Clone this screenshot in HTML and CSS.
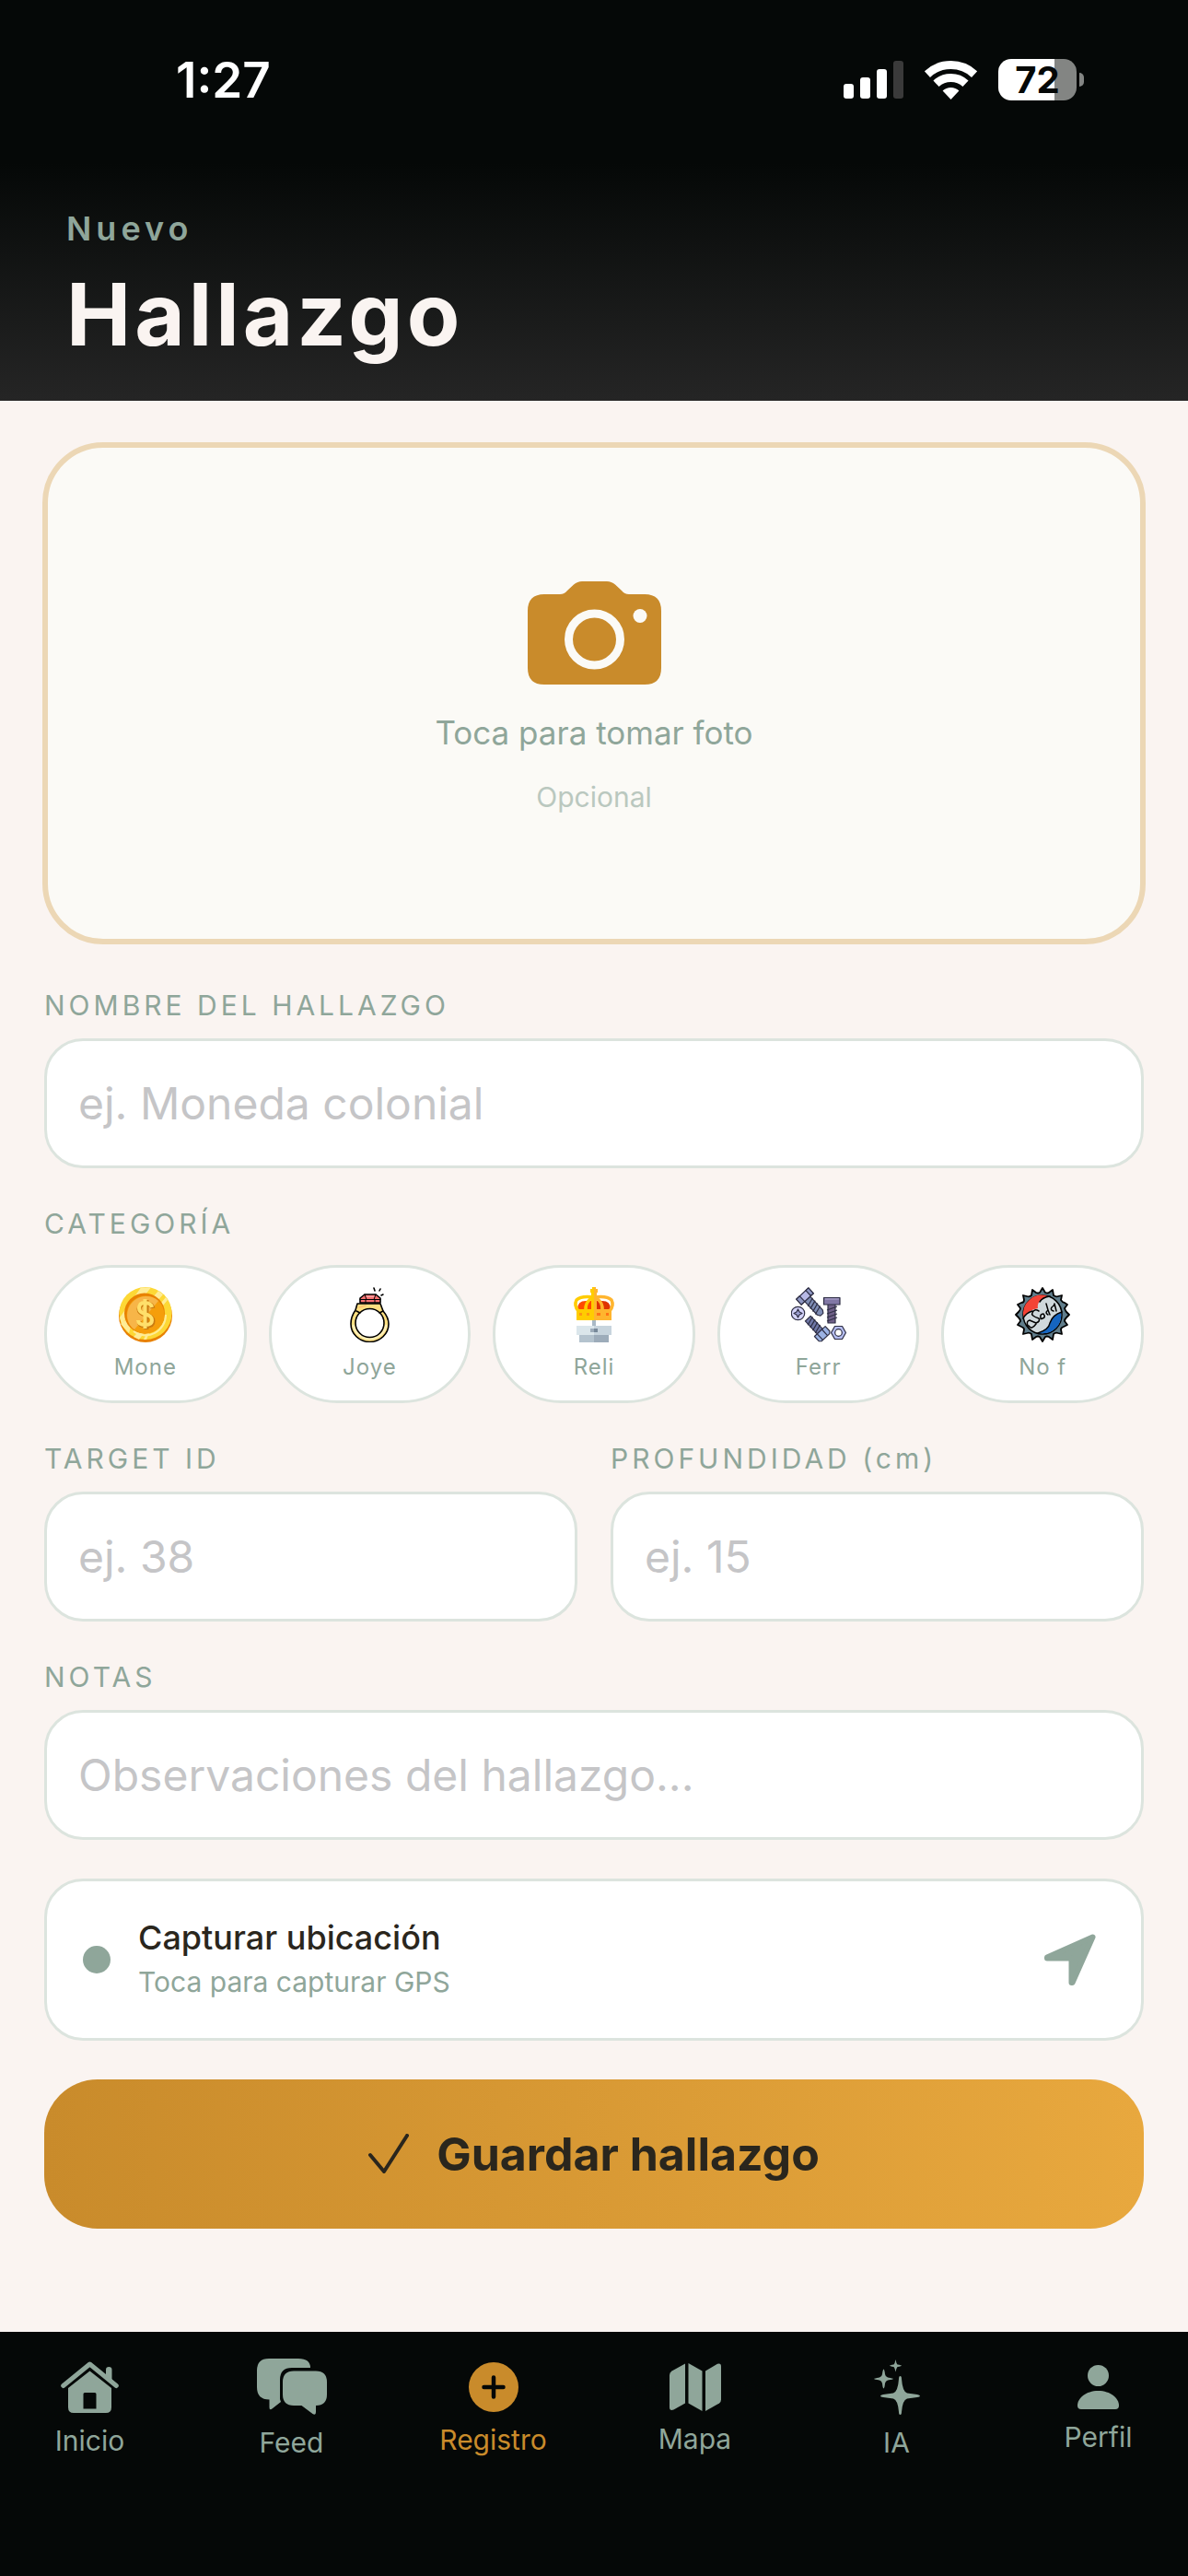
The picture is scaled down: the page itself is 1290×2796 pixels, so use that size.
FILE: index.html
```html
<!DOCTYPE html>
<html lang="es">
  <head>
    <meta charset="UTF-8" />
    <meta name="viewport" content="width=device-width, initial-scale=1.0" />
    <title>Nuevo Hallazgo</title>
    <link rel="stylesheet" href="styles.css">
  </head>
  <body>
    <div class="status-bar">
      <span class="status-time">1:27</span>
      <div class="status-icons">
        <svg width="65" height="41" viewBox="0 0 65 41" fill="#fff">
          <rect x="0" y="25" width="11" height="16" rx="3" />
          <rect x="18" y="18" width="11" height="23" rx="3" />
          <rect x="36" y="9" width="11" height="32" rx="3" />
          <rect x="54" y="0" width="11" height="41" rx="3" fill="#3a3a3a" />
        </svg>
        <svg width="57" height="42" viewBox="0 0 57 42" fill="none" stroke="#fff" stroke-width="9">
          <path d="M2.9 14.6A37.5 37.5 0 0 1 54.1 14.6" />
          <path d="M12.5 24.8A23.5 23.5 0 0 1 44.5 24.8" />
          <path d="M28.5 42L19.6 32.5A13 13 0 0 1 37.4 32.5Z" fill="#fff" stroke="none" />
        </svg>
        <div class="battery">
          <span class="battery-level">72</span>
          <span class="battery-tip"></span>
        </div>
      </div>
    </div>

    <header class="header">
      <p class="header-kicker">Nuevo</p>
      <h1 class="header-title">Hallazgo</h1>
    </header>

    <main class="form">
      <!-- Photo -->
      <button class="photo" type="button">
        <svg width="145" height="112" viewBox="0 0 145 112">
          <path fill="#c98b2b" d="M18 14H35Q40 14 43 10L50 3.500Q54 0 59 0H86Q91 0 95 3.500L102 10Q105 14 110 14H127Q145 14 145 32V94Q145 112 127 112H18Q0 112 0 94V32Q0 14 18 14Z" />
          <circle cx="72.500" cy="63" r="28" fill="none" stroke="#fbfaf6" stroke-width="9" />
          <circle cx="122" cy="37.500" r="7.500" fill="#fbfaf6" />
        </svg>
        <span class="photo-text">Toca para tomar foto</span>
        <span class="photo-hint">Opcional</span>
      </button>

      <!-- Name -->
      <div class="field">
        <label class="label" for="nombre">NOMBRE DEL HALLAZGO</label>
        <input class="input" id="nombre" type="text" placeholder="ej. Moneda colonial" />
      </div>

      <!-- Category -->
      <div class="field">
        <h2 class="label label-category">CATEGORÍA</h2>
        <div class="categories">
          <button class="category" type="button">
            <svg width="60" height="60" viewBox="0 0 60 60">
              <ellipse cx="30" cy="31" rx="29" ry="29" fill="#e88102" />
              <circle cx="30" cy="28.500" r="28.500" fill="#fdd835" />
              <path fill="#ffec96" d="M25 0.500L36 0.500L4 40L2 33ZM44 4L49 8L43 15L38 11ZM52 11L54 14L49 20L47 17ZM3 40L18 28L12 50ZM17 54L25 46L29 49L23 57ZM28 57L31 50H34L31 57Z" />
              <circle cx="29" cy="28.500" r="22" fill="#e88102" />
              <circle cx="30" cy="30" r="20.500" fill="#f59e0b" />
              <path fill="#f7b548" d="M13 41A20.500 20.500 0 0 1 44 15L18 46Q15 44 13 41Z" />
              <path d="M52 30A22 22 0 0 1 17 48" fill="none" stroke="#ffec96" stroke-width="2" />
              <path d="M38 23Q37 18 30 18Q23 18 23 24Q23 28 30 30Q38 32 38 37Q38 42 31 42Q23 42 23 37M31 14V46" fill="none" stroke="#c97a10" stroke-width="5" />
              <path d="M37 22Q36 17 29 17Q23 17 23 23Q23 27 29 29Q37 31 37 36Q37 41 30 41Q22 41 22 36M29.500 13V45" fill="none" stroke="#ffdf6b" stroke-width="4" />
            </svg>
            <span>Mone</span>
          </button>
          <button class="category" type="button">
            <svg width="60" height="60" viewBox="0 0 60 60" stroke="#000" stroke-width="1.600" stroke-linejoin="round" stroke-linecap="round">
              <path fill="#ffdf80" d="M17 18H42L45 26Q51 33 51 40A20.500 19.500 0 1 1 10 40Q10 32 15 25Z" />
              <path fill="none" stroke="#fff0b8" stroke-width="2.500" d="M12.800 42A18 17 0 0 0 48.200 42" />
              <circle cx="30.500" cy="39" r="15.500" fill="#fff" />
              <path fill="none" stroke="#ffc170" d="M19 22L26 20" />
              <path fill="none" d="M16 26L20 28M45 26L41 28" />
              <path fill="#f87171" d="M20 17V12L25 8H37L42 12V17Z" />
              <path fill="none" stroke="#ffa3a3" d="M27 10.200H35" />
              <path fill="none" stroke-width="1" d="M20 13.500H42M26 13.500V17M36 13.500V17M25 8L27 13.500M37 8L35 13.500" />
              <path fill="none" d="M35 1L36 4M42 2L41 4M45 8L43 9" />
            </svg>
            <span>Joye</span>
          </button>
          <button class="category" type="button">
            <svg width="60" height="60" viewBox="0 0 60 60">
              <path fill="#ff4b00" d="M12 24Q12 15 21 15H30V24Z" />
              <path fill="#df3300" d="M48 24Q48 15 39 15H30V24Z" />
              <path fill="none" stroke="#fc0" stroke-width="3.500" d="M13 26Q8 20 11 14Q16 9 30 11M21 26Q20 15 30 11" />
              <path fill="none" stroke="#ffb52e" stroke-width="3.500" d="M47 26Q52 20 49 14Q44 9 30 11M39 26Q40 15 30 11" />
              <path fill="#fc0" d="M11 24H30V36H11ZM28 0H30V25H27V6H26V2H28Z" />
              <path fill="#ffb52e" d="M30 24H49V36H30ZM30 0H32V2H34V6H33V25H30Z" />
              <path fill="#ff9811" d="M14 28H17V31H14ZM22 28H25V31H22Z" />
              <path fill="#ff7315" d="M33 28H37V31H33ZM43 28H46V31H43Z" />
              <path fill="#a9b9c6" d="M28 36H32V42H28Z" />
              <path fill="#dbe6eb" d="M11 42H30V52H11Z" />
              <path fill="#c7d4dd" d="M30 42H49V52H30Z" />
              <path fill="#b4c3ce" d="M14 52H30V60H14Z" />
              <path fill="#9dacba" d="M30 52H46V60H30Z" />
              <path fill="#9dacba" d="M26 45H30V49H26Z" />
              <path fill="#778899" d="M30 45H34V49H30Z" />
            </svg>
            <span>Reli</span>
          </button>
          <button class="category" type="button">
            <svg width="60" height="60" viewBox="0 0 60 60" stroke="#2f2f45" stroke-width="1.200" stroke-linejoin="round">
              <g transform="translate(15 10) rotate(-43)">
                <path fill="#7f8db5" d="M-4 4H4V24L2 27H-2L-4 24Z" />
                <path fill="none" d="M-5 10L5 7M-5 14L5 11M-5 18L5 15M-5 22L5 19" />
                <path fill="#b7b9e6" d="M-9 -4H9V4H-9Z" />
                <path fill="#8f98c4" d="M-9 -4H-4V4H-9ZM5 -4H9V4H5Z" />
              </g>
              <path fill="#6f6088" d="M40 18H48V39H40Z" />
              <path fill="none" d="M39 25L50 21M39 29L50 25M39 33L50 29M39 37L50 33" />
              <path fill="#8177a5" d="M35.500 11.500H53V19H35.500Z" />
              <path fill="none" stroke="#aaa2c8" d="M37 13H52" />
              <circle cx="7.500" cy="28.500" r="7.200" fill="#d3d3fa" />
              <path fill="#9fa2d8" d="M7.500 24L9 27L12 28.500L9 30L7.500 33L6 30L3 28.500L6 27Z" />
              <g transform="translate(34 51) rotate(137)">
                <path fill="#7079a8" d="M-4 4H4V23H-4Z" />
                <path fill="none" d="M-5 9L5 6M-5 13L5 10M-5 17L5 14M-5 21L5 18" />
                <path fill="#9bb2e3" d="M-8 -3L-6 -5H6L8 -3V4H-8Z" />
                <path fill="none" d="M-3 -5V4M4 -5V4" />
              </g>
              <path fill="#b5bdf0" d="M47.500 42.500H55.500L59.500 49.500L55.500 56.500H47.500L43.500 49.500Z" />
              <circle cx="51.500" cy="49.500" r="3.800" fill="#fff" />
            </svg>
            <span>Ferr</span>
          </button>
          <button class="category" type="button">
            <svg width="60" height="60" viewBox="0 0 60 60" stroke-linejoin="round" stroke-linecap="round">
              <path fill="#607d8b" stroke="#000" stroke-width="1.800" d="M30 1L33 6Q36 7 37 6L41 3L42 9Q45 11 47 10L51 9L50 14Q52 17 54 17L57 19L54 23Q55 26 56 27L59 30L56 33Q54 35 54 37L57 41L53 43Q50 44 50 46L51 51L47 50Q44 49 42 51L41 57L37 54Q35 53 33 54L30 59L27 54Q25 53 23 54L19 57L18 51Q16 49 13 50L9 51L10 46Q10 44 7 43L3 41L6 37Q6 35 4 33L1 30L4 27Q6 25 6 23L3 19L7 17Q10 17 10 14L9 9L13 10Q16 11 18 9L19 3L23 6Q25 7 27 6Z" />
              <circle cx="30" cy="30" r="21" fill="#cfd8dc" stroke="#000" stroke-width="1.500" />
              <path fill="#f44336" d="M9.500 33A20 20 0 0 1 36 10L27 15Q24 19 25 23Q19 24 15 27Q12 29 9.500 33Z" />
              <path fill="#1565c0" d="M50 27Q52 42 38 49Q32 51 25 50Q36 46 38 39Q40 31 50 27Z" />
              <path fill="none" stroke="#000" stroke-width="1.500" d="M9 34Q12 28 19 26M27 16Q30 11 38 10M25 50Q37 46 38 39Q41 30 51 27M14 42Q12 37 16 36L23 39Q28 37 26 34Q17 31 19 28Q21 23 26 26M23 40Q18 47 15 42M28 34Q27 29 31 29Q34 33 30 34Q28 35 28 34M36 30Q32 28 36 25L34 18M36 25L38 30M42 26Q38 25 40 22Q43 20 43 18L45 26" />
            </svg>
            <span>No f</span>
          </button>
        </div>
      </div>

      <!-- Target ID and depth -->
      <div class="row">
        <div class="field">
          <label class="label" for="target">TARGET ID</label>
          <input class="input" id="target" type="text" inputmode="numeric" placeholder="ej. 38" />
        </div>
        <div class="field">
          <label class="label" for="profundidad">PROFUNDIDAD (cm)</label>
          <input class="input" id="profundidad" type="text" inputmode="numeric" placeholder="ej. 15" />
        </div>
      </div>

      <!-- Notes -->
      <div class="field">
        <label class="label" for="notas">NOTAS</label>
        <textarea class="input" id="notas" rows="1" placeholder="Observaciones del hallazgo..."></textarea>
      </div>

      <!-- Location -->
      <button class="location" type="button">
        <span class="location-dot"></span>
        <span class="location-info">
          <span class="location-title">Capturar ubicación</span>
          <span class="location-text">Toca para capturar GPS</span>
        </span>
        <svg width="56" height="56" viewBox="0 0 56 56" fill="#8fa69a" stroke="#8fa69a" stroke-width="6" stroke-linejoin="round">
          <path d="M52.500 3.500L3 25.500V26.500H29.500V53H30.500Z" />
        </svg>
      </button>

      <button class="save" type="submit">
        <svg width="44" height="44" viewBox="0 0 44 44" fill="none" stroke="#2a261d" stroke-width="4" stroke-linecap="round" stroke-linejoin="round">
          <path d="M2 23L17 41L42 2" />
        </svg>
        <span>Guardar hallazgo</span>
      </button>
    </main>

    <nav class="tab-bar">
      <a class="tab" href="#inicio">
        <svg width="63" height="56" viewBox="0 0 63 56" fill="currentColor">
          <path fill="none" stroke="currentColor" stroke-width="5" stroke-linecap="round" stroke-linejoin="round" d="M2.700 26.500L31.500 3L60.300 26.500" />
          <path d="M49 17V9Q49 6 52.200 6Q55.500 6 55.500 9V22Z" />
          <path fill-rule="evenodd" d="M31.500 10.500L55 29V50Q55 56 49 56H14Q8 56 8 50V29ZM26 34Q24.500 34 24.500 35.500V51.500H38.500V35.500Q38.500 34 37 34Z" />
        </svg>
        <span>Inicio</span>
      </a>
      <a class="tab" href="#feed">
        <svg width="76" height="61" viewBox="0 0 76 61" fill="currentColor">
          <path d="M13 0H45Q58 0 58 10H38Q25 10 25 23V44L26 47L17 54Q13.500 57 13.500 53V44.500Q0 44.500 0 31V13Q0 0 13 0Z" />
          <path d="M40 13.500H64Q76 13.500 76 25.500V39Q76 51 64 51V58Q64 62 60.500 60L48.500 51H40Q28 51 28 39V25.500Q28 13.500 40 13.500Z" />
        </svg>
        <span>Feed</span>
      </a>
      <a class="tab tab-active" href="#registro">
        <svg width="54" height="54" viewBox="0 0 54 54">
          <circle cx="27" cy="27" r="27" fill="currentColor" />
          <path fill="none" stroke="#050807" stroke-width="4.500" stroke-linecap="round" d="M16.500 27H37.500M27 16.500V37.500" />
        </svg>
        <span>Registro</span>
      </a>
      <a class="tab" href="#mapa">
        <svg width="56" height="52" viewBox="0 0 56 52" fill="currentColor">
          <path d="M17 0.500V43.500L4.500 50.500Q0 52 0 48V13Q0 10 2.500 8.500Z" />
          <path d="M20.500 0L35.500 8.500V52L20.500 43.500Z" />
          <path d="M39 8.500L52 0.800Q56 -0.500 56 3.500V39.500Q56 42 54 43.500L39 52Z" />
        </svg>
        <span>Mapa</span>
      </a>
      <a class="tab" href="#ia">
        <svg width="50" height="60" viewBox="0 0 50 60" fill="currentColor">
          <path d="M28.500 18Q30 18 30 21Q31 35 36 36.500L47 38Q50 38.500 50 39.500Q50 40.500 47 41L36 42.500Q31 44 30 57Q30 60 28.500 60Q27 60 27 57Q26 44 21 42.500L10 41Q7 40.500 7 39.500Q7 38.500 10 38L21 36.500Q26 35 27 21Q27 18 28.500 18Z" />
          <path d="M10.500 10.500Q11.500 11 12 16Q12.500 19 15 19.500Q21 20.500 21 21Q21 21.500 15 22.500Q12.500 23 12 26Q11.500 31 10.500 31.500Q9.500 31 9 26Q8.500 23 6 22.500Q0 21.500 0 21Q0 20.500 6 19.500Q8.500 19 9 16Q9.500 11 10.500 10.500Z" />
          <path d="M23.500 0Q24.300 4.500 25.500 5.500Q30 6.200 30 6.800Q30 7.400 25.500 8Q24.300 9 23.500 13.500Q22.700 9 21.500 8Q17 7.400 17 6.800Q17 6.200 21.500 5.500Q22.700 4.500 23.500 0Z" />
        </svg>
        <span>IA</span>
      </a>
      <a class="tab" href="#perfil">
        <svg width="45" height="48" viewBox="0 0 45 48" fill="currentColor">
          <circle cx="22.500" cy="11.500" r="11.500" />
          <path d="M22.500 28C36 28 45 36 45 44Q45 48 41 48H4Q0 48 0 44C0 36 9 28 22.500 28Z" />
        </svg>
        <span>Perfil</span>
      </a>
    </nav>
  </body>
</html>
```
FILE: styles.css
```css
:root {
  --bg: #faf4f1;
  --dark: #050807;
  --sage: #8fa69a;
  --gold: #c98b2b;
  --text: #2a261d;
  --border: #dce4de;
}

* {
  margin: 0;
  padding: 0;
  box-sizing: border-box;
}

body {
  display: flex;
  flex-direction: column;
  min-height: 100vh;
  font-family: Inter, "Liberation Sans", sans-serif;
  background-color: var(--bg);
  color: var(--text);
}

button,
input,
textarea {
  font-family: inherit;
  color: inherit;
}

button {
  cursor: pointer;
}

svg {
  display: block;
  flex-shrink: 0;
}

/* Status bar */
.status-bar {
  display: flex;
  justify-content: space-between;
  align-items: center;
  height: 177px;
  padding: 0 121px 4px 191px;
  background-color: var(--dark);
  color: #fff;
}

.status-time {
  font-size: 53px;
  font-weight: 600;
}

.status-icons {
  display: flex;
  align-items: center;
  gap: 23px;
}

.battery {
  position: relative;
  width: 85px;
  height: 45px;
  border-radius: 14px;
  background: linear-gradient(90deg, #fff 72%, #838583 72%);
  color: var(--dark);
  text-align: center;
}

.battery-level {
  font-size: 40px;
  font-weight: 700;
  line-height: 45px;
}

.battery-tip {
  position: absolute;
  top: 15px;
  right: -8px;
  width: 5px;
  height: 15px;
  border-radius: 0 6px 6px 0;
  background-color: #838583;
}

/* Header */
.header {
  padding: 47px 72px 38px;
  background: linear-gradient(180deg, var(--dark), #252525);
}

.header-kicker {
  margin-bottom: 13px;
  font-size: 36px;
  font-weight: 600;
  line-height: 48px;
  letter-spacing: 5px;
  color: var(--sage);
}

.header-title {
  font-size: 94px;
  font-weight: 700;
  line-height: 112px;
  letter-spacing: 4px;
  color: #faf4f1;
}

/* Form */
.form {
  display: flex;
  flex: 1;
  flex-direction: column;
  gap: 42px;
  padding: 45px 48px;
}

.photo {
  display: flex;
  flex-direction: column;
  justify-content: center;
  align-items: center;
  gap: 28px;
  height: 545px;
  margin: 0 -2px 6px;
  padding-top: 8px;
  border: 6px solid #ecd7b5;
  border-radius: 66px;
  background-color: #fbfaf6;
}

.photo-text {
  font-size: 35px;
  line-height: 48px;
  color: var(--sage);
}

.photo-hint {
  font-size: 30px;
  line-height: 36px;
  color: #bac8bf;
}

.field {
  display: flex;
  flex-direction: column;
  min-width: 0;
}

.label {
  margin-bottom: 18px;
  font-size: 30px;
  font-weight: 400;
  line-height: 36px;
  letter-spacing: 4px;
  color: var(--sage);
}

.label-category {
  margin-bottom: 27px;
}

.input {
  display: block;
  width: 100%;
  height: 141px;
  padding: 36px 34px;
  border: 3px solid var(--border);
  border-radius: 42px;
  outline: none;
  background-color: #fff;
  font-size: 48px;
  line-height: 63px;
  resize: none;
  overflow: hidden;
}

.input::placeholder {
  color: #c5c5c7;
  opacity: 1;
}

.input:focus {
  border-color: var(--gold);
}

.row {
  display: grid;
  grid-template-columns: 1fr 1fr;
  gap: 36px;
}

/* Categories */
.categories {
  display: grid;
  grid-template-columns: repeat(5, 1fr);
  gap: 24px;
}

.category {
  display: flex;
  flex-direction: column;
  align-items: center;
  gap: 12px;
  height: 150px;
  padding-top: 21px;
  border: 3px solid var(--border);
  border-radius: 74px;
  background-color: #fff;
  font-size: 24px;
  line-height: 30px;
  letter-spacing: 1px;
  color: var(--sage);
}

/* Location */
.location {
  display: flex;
  align-items: center;
  gap: 30px;
  height: 176px;
  padding: 0 49px 0 39px;
  border: 3px solid var(--border);
  border-radius: 42px;
  background-color: #fff;
  text-align: left;
}

.location-dot {
  width: 30px;
  height: 30px;
  border-radius: 50%;
  background-color: var(--sage);
}

.location-info {
  display: flex;
  flex: 1;
  flex-direction: column;
}

.location-title {
  font-size: 36px;
  font-weight: 500;
  line-height: 48px;
}

.location-text {
  font-size: 30px;
  line-height: 48px;
  color: var(--sage);
}

.save {
  display: flex;
  justify-content: center;
  align-items: center;
  gap: 30px;
  height: 162px;
  border: none;
  border-radius: 58px;
  background: linear-gradient(90deg, #c98b2b, #e8a83e);
  font-size: 50px;
  font-weight: 700;
}

/* Tab bar */
.tab-bar {
  display: flex;
  justify-content: space-between;
  align-items: center;
  padding: 29px 24px 127px;
  background-color: var(--dark);
}

.tab {
  display: flex;
  flex-direction: column;
  align-items: center;
  gap: 12px;
  width: 147px;
  font-size: 30px;
  line-height: 36px;
  text-decoration: none;
  color: var(--sage);
}

.tab-active {
  color: var(--gold);
}
```
